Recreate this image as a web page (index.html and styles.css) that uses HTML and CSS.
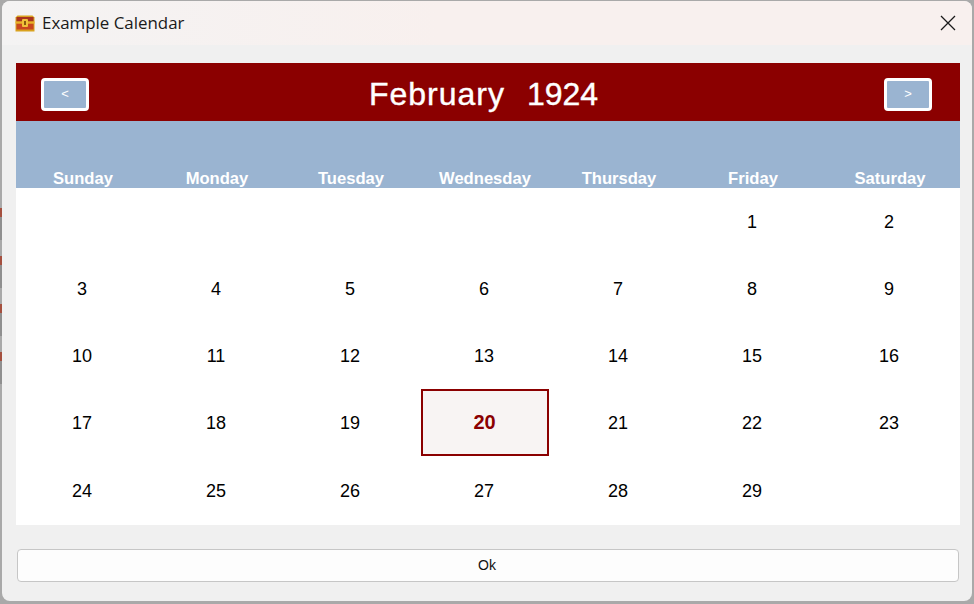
FILE: index.html
```html
<!DOCTYPE html>
<html lang="en">
<head>
<meta charset="utf-8">
<title>Example Calendar</title>
<link rel="stylesheet" href="styles.css">
</head>
<body>
<div class="window">
  <div class="titlebar">
    <svg class="app-icon" width="20" height="17" viewBox="0 0 20 17">
      <path d="M2.5 0.5h15l2 2v14h-19v-14z" fill="#d9a21e"/>
      <rect x="1.5" y="2" width="17" height="4.5" fill="#a8321f"/>
      <rect x="1.5" y="8.5" width="17" height="6" fill="#c9481f"/>
      <rect x="0.5" y="6.5" width="19" height="2" fill="#e8b32a"/>
      <rect x="7" y="4" width="6" height="8" rx="1" fill="#f0c23a"/>
      <rect x="9" y="6" width="2" height="4" fill="#8a5a10"/>
    </svg>
    <span class="title">Example Calendar</span>
    <svg class="close" width="16" height="16" viewBox="0 0 16 16">
      <path d="M1 1L15 15M15 1L1 15" stroke="#1a1a1a" stroke-width="1.3" fill="none"/>
    </svg>
  </div>
  <div class="content">
    <div class="calendar">
      <div class="month-bar">
        <button class="nav">&lt;</button>
        <div class="month"><span class="month-name">February</span><span>1924</span></div>
        <button class="nav">&gt;</button>
      </div>
      <div class="weekdays">
        <div>Sunday</div><div>Monday</div><div>Tuesday</div><div>Wednesday</div><div>Thursday</div><div>Friday</div><div>Saturday</div>
      </div>
      <div class="days">
        <div></div><div></div><div></div><div></div><div></div><div>1</div><div>2</div>
        <div>3</div><div>4</div><div>5</div><div>6</div><div>7</div><div>8</div><div>9</div>
        <div>10</div><div>11</div><div>12</div><div>13</div><div>14</div><div>15</div><div>16</div>
        <div>17</div><div>18</div><div>19</div><div class="today"><span>20</span></div><div>21</div><div>22</div><div>23</div>
        <div>24</div><div>25</div><div>26</div><div>27</div><div>28</div><div>29</div><div></div>
      </div>
    </div>
    <button class="ok">Ok</button>
  </div>
</div>
</body>
</html>
```

FILE: styles.css
```css
* { box-sizing: border-box; }
html, body { margin: 0; height: 100%; }
body {
  width: 974px;
  height: 604px;
  overflow: hidden;
  background:
    repeating-linear-gradient(180deg, #a9a9a9 0 8px, #a5503f 8px 17px, #8f8f8f 17px 40px, #a9a9a9 40px 48px) 0 200px / 2px 192px no-repeat,
    #a9a9a9;
  padding: 1px 2px 3px 2px;
  font-family: "Liberation Sans", Arial, sans-serif;
}
.window {
  width: 970px;
  height: 600px;
  background: #f0f0f0;
  border-radius: 8px;
  overflow: hidden;
  display: flex;
  flex-direction: column;
}
.titlebar {
  height: 44px;
  flex: none;
  display: flex;
  align-items: center;
  padding: 0 16px 0 13px;
  background: linear-gradient(90deg, #f4f3f3 0%, #f8f0ee 45%, #f8f0ee 100%);
}
.app-icon { flex: none; margin-right: 7px; }
.title {
  flex: 1;
  font-family: "Open Sans", "Noto Sans", sans-serif;
  font-size: 16.9px;
  color: #1a1a1a;
  padding-bottom: 2px;
}
.close { flex: none; }
.content {
  flex: 1;
  display: flex;
  flex-direction: column;
  padding: 18px 12px 0 14px;
}
.calendar { width: 944px; background: #fff; }
.month-bar {
  height: 58px;
  background: #8b0000;
  display: flex;
  align-items: center;
  justify-content: space-between;
  padding: 4px 28px 0 25px;
}
.nav {
  width: 48px;
  height: 33px;
  padding: 0 0 2px;
  background: #9ab4d1;
  border: 3px solid #fff;
  border-radius: 4px;
  color: #fff;
  font-family: "Liberation Sans", sans-serif;
  font-size: 13px;
}
.month {
  display: flex;
  gap: 22px;
  color: #fff;
  font-size: 32px;
  line-height: 1;
  -webkit-text-stroke: 0.4px #fff;
  margin-right: 6px;
}
.month-name { letter-spacing: 1px; }
.weekdays {
  height: 67px;
  background: #9ab4d1;
  display: grid;
  grid-template-columns: repeat(6, 134px) 140px;
  align-items: end;
  text-align: center;
  color: #fff;
  font-size: 16.6px;
  font-weight: bold;
  line-height: 19px;
}
.days {
  display: grid;
  grid-template-columns: repeat(6, 134px) 140px;
  grid-template-rows: repeat(4, 67px) 69px;
  font-size: 18px;
  color: #000;
}
.days > div {
  display: flex;
  align-items: center;
  justify-content: center;
  padding: 2px 2px 0 0;
}
.days > .today { padding: 0 1px 0 0; }
.today span {
  width: 128px;
  height: 67px;
  display: flex;
  align-items: center;
  justify-content: center;
  background: #f8f4f3;
  border: 2px solid #8b0000;
  color: #8b0000;
  font-size: 20px;
  font-weight: bold;
}
.ok {
  width: 942px;
  height: 33px;
  margin: 24px 0 0 1px;
  padding: 0 2px 2px 0;
  background: #fdfdfd;
  border: 1px solid #c6c6c6;
  border-radius: 4px;
  font-family: "Liberation Sans", sans-serif;
  font-size: 14px;
  color: #111;
}
```
